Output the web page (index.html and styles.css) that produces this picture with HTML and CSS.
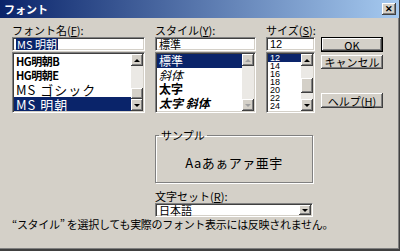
FILE: index.html
```html
<!DOCTYPE html>
<html lang="ja">
<head>
  <meta charset="UTF-8">
  <title>フォント</title>
  <link rel="stylesheet" href="styles.css">
</head>
<body>
  <div class="window">
    <div class="titlebar">
      <span class="title">フォント</span>
      <span class="close">✕</span>
    </div>
    <div class="content">
      <div class="top">
        <div class="col col-font">
          <div class="lbl">フォント名(<u>F</u>):</div>
          <div class="field"><span class="sel-text">MS 明朝</span></div>
          <div class="list">
            <div class="items">
              <div class="item font-hg">HG明朝B</div>
              <div class="item font-hg">HG明朝E</div>
              <div class="item font-ms">MS ゴシック</div>
              <div class="item font-ms selected">MS 明朝</div>
            </div>
            <div class="scroll">
              <div class="sb-btn up"></div>
              <div class="track"></div>
              <div class="thumb"></div>
              <div class="sb-btn down"></div>
            </div>
          </div>
        </div>

        <div class="col col-style">
          <div class="lbl">スタイル(<u>Y</u>):</div>
          <div class="field">標準</div>
          <div class="list">
            <div class="items">
              <div class="item style-item selected">標準</div>
              <div class="item style-item italic">斜体</div>
              <div class="item style-item bold">太字</div>
              <div class="item style-item bold italic">太字 斜体</div>
            </div>
            <div class="scroll">
              <div class="sb-btn up disabled"></div>
              <div class="track"></div>
              <div class="sb-btn down disabled"></div>
            </div>
          </div>
        </div>

        <div class="col col-size">
          <div class="lbl">サイズ(<u>S</u>):</div>
          <div class="field num">12</div>
          <div class="list">
            <div class="items size-items">
              <div class="size selected">12</div>
              <div class="size">14</div>
              <div class="size">16</div>
              <div class="size">18</div>
              <div class="size">20</div>
              <div class="size">22</div>
              <div class="size">24</div>
            </div>
            <div class="scroll">
              <div class="sb-btn up"></div>
              <div class="track short"></div>
              <div class="thumb tall"></div>
              <div class="track"></div>
              <div class="sb-btn down"></div>
            </div>
          </div>
        </div>

        <div class="col col-btns">
          <button class="btn default">OK</button>
          <button class="btn cancel">キャンセル</button>
          <button class="btn help">ヘルプ(<u>H</u>)</button>
        </div>
      </div>

      <div class="lower">
        <fieldset class="sample">
          <legend>サンプル</legend>
          <div class="sample-text">Aaあぁアァ亜宇</div>
        </fieldset>
        <div class="lbl">文字セット(<u>R</u>):</div>
        <div class="field combo">
          <span>日本語</span>
          <span class="sb-btn down drop"></span>
        </div>
      </div>

      <div class="note">“スタイル” を選択しても実際のフォント表示には反映されません。</div>
    </div>
  </div>
</body>
</html>
```

FILE: styles.css
```css
body {
  margin: 0;
  background: #d4d0c8;
}
.window {
  width: 400px;
  height: 251px;
  box-sizing: border-box;
  background: #d4d0c8;
  border-right: 1px solid #404040;
  border-bottom: 2px solid #404040;
  box-shadow: inset -1px -1px #808080;
  font-family: "Noto Sans CJK JP", sans-serif;
  font-size: 11px;
  color: #000;
  overflow: hidden;
}
.titlebar {
  height: 18px;
  display: flex;
  align-items: center;
  justify-content: space-between;
  padding: 0 3px 0 4px;
  background: linear-gradient(90deg, #0a246a, #a6caf0);
  color: #fff;
  font-weight: bold;
  font-size: 11px;
}
.title {
  line-height: 12px;
}
.close {
  width: 14px;
  height: 12px;
  box-sizing: border-box;
  background: #d4d0c8;
  color: #000;
  font-size: 9px;
  font-weight: bold;
  line-height: 12px;
  text-align: center;
  box-shadow: inset -1px -1px #404040, inset 1px 1px #fff, inset -2px -2px #808080;
}
.content {
  padding-left: 12px;
}
.top {
  display: flex;
}
.col-font { width: 133px; }
.col-style { width: 101px; margin-left: 10px; }
.col-size { width: 49px; margin-left: 10px; }
.col-btns {
  width: 62px;
  margin-left: 6px;
  display: flex;
  flex-direction: column;
  padding-top: 19px;
}
.lbl {
  height: 19px;
  display: flex;
  align-items: flex-end;
  line-height: 12px;
  padding-bottom: 1px;
  box-sizing: border-box;
  white-space: nowrap;
}
.field {
  height: 14px;
  box-sizing: border-box;
  background: #fff;
  border: 1px solid;
  border-color: #808080 #fff #fff #808080;
  box-shadow: inset 1px 1px #404040, inset -1px -1px #d4d0c8;
  padding: 0 3px;
  font-size: 11px;
  line-height: 12px;
  white-space: nowrap;
  overflow: hidden;
}
.field.num {
  font-family: "Liberation Sans", sans-serif;
}
.sel-text {
  background: #0a246a;
  color: #fff;
  padding: 0 1px;
}
.list {
  margin-top: 1px;
  height: 61px;
  box-sizing: border-box;
  display: flex;
  background: #fff;
  border: 1px solid;
  border-color: #808080 #fff #fff #808080;
  box-shadow: inset 1px 1px #404040, inset -1px -1px #d4d0c8;
  padding: 1px;
}
.items {
  flex: 1;
  overflow: hidden;
}
.item {
  height: 14px;
  line-height: 14px;
  padding-left: 2px;
  white-space: nowrap;
}
.font-hg {
  font-weight: bold;
  font-size: 11px;
  letter-spacing: -0.5px;
}
.font-ms {
  font-size: 13px;
  letter-spacing: 1px;
  height: 15px;
  line-height: 15px;
}
.style-item {
  font-size: 12px;
}
.italic { font-style: italic; }
.bold { font-weight: bold; }
.selected {
  background: #0a246a;
  color: #fff;
}
.size-items {
  font-family: "Liberation Sans", sans-serif;
}
.size {
  height: 8px;
  line-height: 8px;
  font-size: 9px;
  padding-left: 2px;
}
.scroll {
  width: 12px;
  display: flex;
  flex-direction: column;
}
.sb-btn {
  width: 12px;
  height: 12px;
  flex: none;
  box-sizing: border-box;
  background: #d4d0c8;
  box-shadow: inset -1px -1px #404040, inset 1px 1px #fff, inset -2px -2px #808080;
  display: flex;
  align-items: center;
  justify-content: center;
}
.sb-btn::after {
  content: "";
  width: 0;
  height: 0;
  border-left: 3px solid transparent;
  border-right: 3px solid transparent;
}
.sb-btn.up::after { border-bottom: 3px solid #000; }
.sb-btn.down::after { border-top: 3px solid #000; }
.sb-btn.disabled::after { border-bottom-color: #a0a0a0; border-top-color: #a0a0a0; }
.track {
  flex: 1;
  background: #ebe9e5;
}
.track.short { flex: none; height: 12px; }
.thumb {
  height: 11px;
  flex: none;
  background: #d4d0c8;
  box-shadow: inset -1px -1px #404040, inset 1px 1px #fff, inset -2px -2px #808080;
}
.thumb.tall { height: 15px; }
.btn {
  width: 62px;
  height: 15px;
  padding: 0;
  box-sizing: border-box;
  border: none;
  background: #d4d0c8;
  font-family: "Noto Sans CJK JP", sans-serif;
  font-size: 11px;
  line-height: 12px;
  color: #000;
  box-shadow: inset -1px -1px #404040, inset 1px 1px #fff, inset -2px -2px #808080;
}
.btn.default {
  border: 1px solid #000;
}
.btn.cancel {
  margin-top: 3px;
  height: 14px;
}
.btn.help {
  margin-top: 24px;
}
.lower {
  margin-left: 143px;
  width: 158px;
}
.sample {
  margin: 16px 0 0 0;
  padding: 0;
  height: 54px;
  box-sizing: border-box;
  border: 1px solid #808080;
  box-shadow: 1px 1px #fff, inset 1px 1px #fff;
  display: flex;
  align-items: center;
  justify-content: center;
}
.sample legend {
  margin-left: 3px;
  padding: 0 2px;
  line-height: 12px;
  font-size: 11px;
}
.sample-text {
  font-size: 13px;
  line-height: 16px;
  margin-top: 2px;
  letter-spacing: 0.5px;
}
.lower .lbl {
  height: 20px;
}
.combo {
  display: flex;
  justify-content: space-between;
  align-items: center;
  padding: 0 1px 0 3px;
  height: 14px;
  line-height: 12px;
}
.drop {
  width: 12px;
  height: 10px;
}
.note {
  margin-top: 1px;
  line-height: 12px;
  font-size: 11px;
  letter-spacing: -0.3px;
  white-space: nowrap;
}
```
